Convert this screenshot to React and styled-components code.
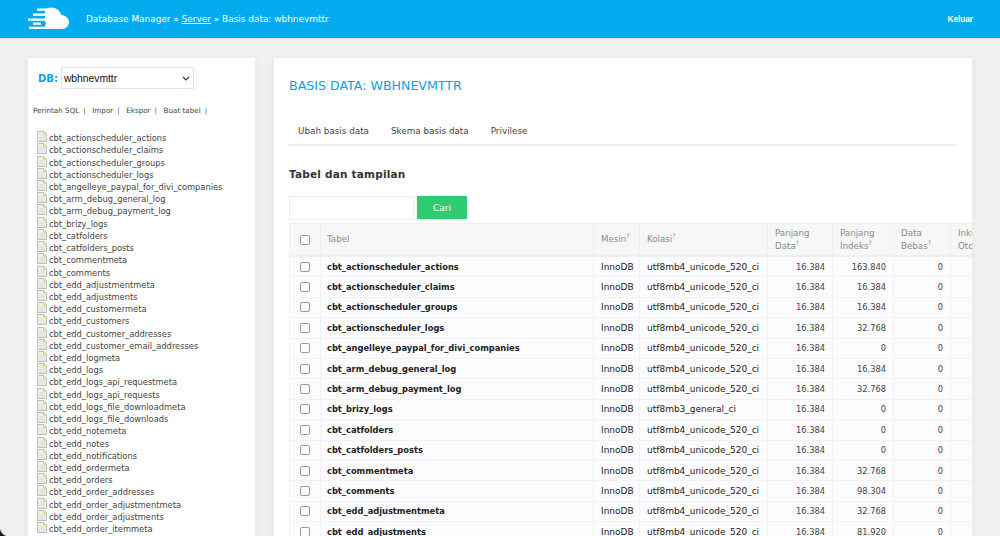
import React from 'react';
import styled, { createGlobalStyle } from 'styled-components';

const GlobalStyle = createGlobalStyle`
  html, body { margin: 0; padding: 0; height: 536px; overflow: hidden; background: #f0f0f0; }
  body { font-family: "DejaVu Sans", Verdana, sans-serif; color: #333; }
  #root { height: 536px; overflow: hidden; }
`;

const Header = styled.header`
  height: 38px;
  background: #04acef;
  display: flex;
  align-items: center;
  padding: 0 27px 0 28px;
  color: #fff;
  font-size: 8.93px;
  border-bottom: 1px solid #e4e4e4;
  box-sizing: content-box;
`;

const Logo = styled.svg`
  width: 41px;
  height: 24px;
  margin-right: 17px;
`;

const Crumbs = styled.div`
  flex: 1;
  a { color: #fff; text-decoration: underline; }
`;

const Logout = styled.a`
  color: #fff;
  font-family: "Liberation Sans", Arial, sans-serif;
  font-size: 8.4px;
  font-weight: 700;
  letter-spacing: -0.1px;
  margin-top: -1px;
`;

const Layout = styled.div`
  display: flex;
  gap: 19px;
  padding: 19px 28px 0;
  align-items: flex-start;
`;

const Sidebar = styled.aside`
  width: 227px;
  height: 500px;
  flex: none;
  background: #fff;
  box-shadow: 0 0 6px rgba(0, 0, 0, 0.06);
  padding: 9px 0 0 5px;
  box-sizing: border-box;
  overflow: hidden;
`;

const DbRow = styled.div`
  display: flex;
  align-items: center;
  gap: 3px;
  padding-left: 5px;
`;

const DbLabel = styled.label`
  color: #04a4e8;
  font-weight: 700;
  font-size: 10px;
`;

const DbSelect = styled.div`
  width: 133px;
  height: 22px;
  box-sizing: border-box;
  border: 1px solid #e5e5e5;
  background: #fff;
  display: flex;
  align-items: center;
  justify-content: space-between;
  padding: 0 3px 0 2px;
  font-family: "Liberation Sans", Arial, sans-serif;
  font-size: 10.3px;
  color: #111;
`;

const SideLinks = styled.div`
  display: flex;
  margin-top: 16px;
  font-size: 7.2px;
  color: #444;
  line-height: 12px;
`;

const SideLink = styled.span`
  white-space: nowrap;
  margin-right: 6.5px;
  &::after { content: "|"; margin-left: 4px; color: #666; }
`;

const TableList = styled.ul`
  list-style: none;
  margin: 15px 0 0;
  padding: 0 0 0 4px;
`;

const TableItem = styled.li`
  display: flex;
  align-items: center;
  height: 12.22px;
  font-size: 8.3px;
  color: #444;
  white-space: nowrap;
`;

const SheetIcon = styled.svg`
  width: 10px;
  height: 11px;
  margin-right: 2px;
  margin-top: -3px;
  flex: none;
`;

const Main = styled.main`
  width: 698px;
  flex: none;
  height: 500px;
  background: #fff;
  box-shadow: 0 0 6px rgba(0, 0, 0, 0.06);
  padding: 0 0 0 15px;
  box-sizing: border-box;
  overflow: hidden;
`;

const Title = styled.h1`
  margin: 0;
  padding-top: 21px;
  font-size: 12.6px;
  line-height: 14px;
  font-weight: 400;
  color: #04a4e8;
`;

const Tabs = styled.nav`
  display: flex;
  gap: 22px;
  margin-top: 32px;
  margin-right: 15px;
  padding: 0 0 7px 9px;
  border-bottom: 2px solid #eee;
  font-size: 8.8px;
  line-height: 12px;
  color: #444;
`;

const SectionTitle = styled.h2`
  margin: 21px 0 0;
  font-size: 10.5px;
  line-height: 14px;
  font-weight: 700;
  letter-spacing: 0.2px;
  color: #333;
`;

const SearchRow = styled.form`
  display: flex;
  gap: 3px;
  margin-top: 15px;
`;

const SearchInput = styled.div`
  width: 125px;
  height: 24px;
  box-sizing: border-box;
  border: 1px solid #eee;
  background: #fff;
`;

const SearchButton = styled.div`
  width: 50px;
  height: 23px;
  background: #2ecc71;
  color: #fff;
  font-size: 9px;
  display: flex;
  align-items: center;
  justify-content: center;
  box-shadow: 0 1px 2px rgba(0, 0, 0, 0.15);
`;

const Table = styled.table`
  border-collapse: collapse;
  table-layout: fixed;
  width: 720px;
  margin-top: 3px;
  background: #fcfcfe;
`;

const Th = styled.th`
  height: 31px;
  padding: 0 0 0 ${({ $pad }) => $pad ?? 7}px;
  background: #f7f7f7;
  border: 1px solid #f0f0f0;
  border-bottom: 2px solid #f0f0f0;
  text-align: left;
  font-size: 8.7px;
  font-weight: 400;
  color: #8a8a8a;
  line-height: 12.5px;
  vertical-align: middle;
  sup { font-size: 6px; line-height: 0; }
`;

const Td = styled.td`
  height: 19.4px;
  padding: 0 0 0 7px;
  border: 1px solid #f3f3f5;
  font-size: 9px;
  color: #222;
  white-space: nowrap;
  overflow: hidden;
`;

const NameCell = styled(Td)`
  padding-left: 6px;
  font-size: 8.3px;
  font-weight: 700;
`;

const NumCell = styled(Td)`
  padding: 0 7px 0 0;
  text-align: right;
  font-size: 8.3px;
  color: #444;
`;

const CheckTd = styled(Td)`
  padding: 0;
`;

const CheckCell = styled.div`
  display: flex;
  justify-content: center;
`;

const Check = styled.span`
  display: block;
  width: 8px;
  height: 8px;
  border: 1px solid #9a9a9a;
  border-radius: 2px;
  background: #fff;
`;

const Corner = styled.svg`
  position: fixed;
  left: 0;
  bottom: 0;
  width: 6px;
  height: 7px;
`;

const sideTables = [
  'actionscheduler_actions', 'actionscheduler_claims', 'actionscheduler_groups', 'actionscheduler_logs',
  'angelleye_paypal_for_divi_companies', 'arm_debug_general_log', 'arm_debug_payment_log', 'brizy_logs',
  'catfolders', 'catfolders_posts', 'commentmeta', 'comments', 'edd_adjustmentmeta', 'edd_adjustments',
  'edd_customermeta', 'edd_customers', 'edd_customer_addresses', 'edd_customer_email_addresses',
  'edd_logmeta', 'edd_logs', 'edd_logs_api_requestmeta', 'edd_logs_api_requests',
  'edd_logs_file_downloadmeta', 'edd_logs_file_downloads', 'edd_notemeta', 'edd_notes',
  'edd_notifications', 'edd_ordermeta', 'edd_orders', 'edd_order_addresses',
  'edd_order_adjustmentmeta', 'edd_order_adjustments', 'edd_order_itemmeta',
];

const rows = [
  ['actionscheduler_actions', '16.384', '163.840'],
  ['actionscheduler_claims', '16.384', '16.384'],
  ['actionscheduler_groups', '16.384', '16.384'],
  ['actionscheduler_logs', '16.384', '32.768'],
  ['angelleye_paypal_for_divi_companies', '16.384', '0'],
  ['arm_debug_general_log', '16.384', '16.384'],
  ['arm_debug_payment_log', '16.384', '32.768'],
  ['brizy_logs', '16.384', '0', 'utf8mb3_general_ci'],
  ['catfolders', '16.384', '0'],
  ['catfolders_posts', '16.384', '0'],
  ['commentmeta', '16.384', '32.768'],
  ['comments', '16.384', '98.304'],
  ['edd_adjustmentmeta', '16.384', '32.768'],
  ['edd_adjustments', '16.384', '81.920'],
];

const Sheet = () => (
  <SheetIcon viewBox="0 0 10 11">
    <path d="M.5.5h6.5l2.5 2.5v7.5h-9z" fill="#f1f0ea" stroke="#bdbdb8" />
    <path d="M6.500.5v3h3z" fill="#efd98f" stroke="#d6c27c" strokeWidth=".5" />
    <path d="M2 5h6M2 7h6M2 9h6" stroke="#dcdcd6" />
  </SheetIcon>
);

export default function App() {
  return (
    <>
      <GlobalStyle />
      <Header>
        <Logo viewBox="0 0 41 24">
          <path fill="#fff" d="M17 22V2.500C19 1.200 21 .5 23 .5c5 0 9 3 10.500 7.500 4 .3 7.500 3.500 7.500 7 0 3.900-3.200 7-7.200 7z" />
          <rect fill="#fff" x="9" y="1.500" width="12" height="2.300" />
          <rect fill="#fff" x="5" y="6.500" width="14" height="2.300" />
          <rect fill="#fff" x="0" y="11.500" width="19" height="2.300" />
          <rect fill="#fff" x="5" y="15.500" width="8" height="2.300" />
          <rect fill="#fff" x="1" y="19.700" width="18" height="2.300" />
          <rect fill="#04acef" x="13" y="15.500" width="5" height="2.300" />
        </Logo>
        <Crumbs>
          Database Manager » <a href="#server">Server</a> » Basis data: wbhnevmttr
        </Crumbs>
        <Logout>Keluar</Logout>
      </Header>
      <Layout>
        <Sidebar>
          <DbRow>
            <DbLabel>DB:</DbLabel>
            <DbSelect>
              wbhnevmttr
              <svg width="8" height="5" viewBox="0 0 8 5">
                <path d="M1 1l3 3 3-3" fill="none" stroke="#333" strokeWidth="1.200" />
              </svg>
            </DbSelect>
          </DbRow>
          <SideLinks>
            <SideLink>Perintah SQL</SideLink>
            <SideLink>Impor</SideLink>
            <SideLink>Ekspor</SideLink>
            <SideLink>Buat tabel</SideLink>
          </SideLinks>
          <TableList>
            {sideTables.map((name) => (
              <TableItem key={name}>
                <Sheet />
                cbt_{name}
              </TableItem>
            ))}
          </TableList>
        </Sidebar>
        <Main>
          <Title>BASIS DATA: WBHNEVMTTR</Title>
          <Tabs>
            <span>Ubah basis data</span>
            <span>Skema basis data</span>
            <span>Privilese</span>
          </Tabs>
          <SectionTitle>Tabel dan tampilan</SectionTitle>
          <SearchRow>
            <SearchInput />
            <SearchButton>Cari</SearchButton>
          </SearchRow>
          <Table>
            <colgroup>
              <col width="31" />
              <col width="273" />
              <col width="46" />
              <col width="128" />
              <col width="65" />
              <col width="61" />
              <col width="57" />
              <col width="59" />
            </colgroup>
            <thead>
              <tr>
                <Th $pad={0}><CheckCell><Check /></CheckCell></Th>
                <Th $pad={6}>Tabel</Th>
                <Th>Mesin<sup>?</sup></Th>
                <Th>Kolasi<sup>?</sup></Th>
                <Th>Panjang<br />Data<sup>?</sup></Th>
                <Th>Panjang<br />Indeks<sup>?</sup></Th>
                <Th>Data<br />Bebas<sup>?</sup></Th>
                <Th>Inkrement<br />Otomatis<sup>?</sup></Th>
              </tr>
            </thead>
            <tbody>
              {rows.map(([name, data, index, collation]) => (
                <tr key={name}>
                  <CheckTd><CheckCell><Check /></CheckCell></CheckTd>
                  <NameCell>cbt_{name}</NameCell>
                  <Td>InnoDB</Td>
                  <Td>{collation || 'utf8mb4_unicode_520_ci'}</Td>
                  <NumCell>{data}</NumCell>
                  <NumCell>{index}</NumCell>
                  <NumCell>0</NumCell>
                  <Td />
                </tr>
              ))}
            </tbody>
          </Table>
        </Main>
      </Layout>
      <Corner viewBox="0 0 6 7">
        <path d="M0 0c.5 3 2.500 5.500 6 7H0z" fill="#1a1a1a" />
      </Corner>
    </>
  );
}
